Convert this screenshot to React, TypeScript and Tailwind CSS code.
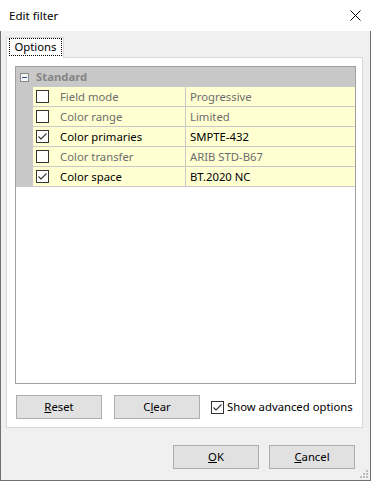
import React from "react";

const rows = [
  { label: "Field mode", value: "Progressive", checked: false },
  { label: "Color range", value: "Limited", checked: false },
  { label: "Color primaries", value: "SMPTE-432", checked: true },
  { label: "Color transfer", value: "ARIB STD-B67", checked: false },
  { label: "Color space", value: "BT.2020 NC", checked: true },
];

function Check({ checked }: { checked: boolean }) {
  return (
    <div className="w-[13px] h-[13px] border border-[#333333] bg-white flex items-center justify-center shrink-0">
      {checked && (
        <svg width="11" height="11" viewBox="0 0 11 11">
          <path d="M1.5 5.5 L4 8 L9.5 2.5" fill="none" stroke="#333333" strokeWidth="1.1" />
        </svg>
      )}
    </div>
  );
}

function Btn({ children, className = "" }: { children: React.ReactNode; className?: string }) {
  return (
    <div
      className={
        "w-[86px] h-[24px] bg-[#e1e1e1] border border-[#adadad] flex items-center justify-center text-black " +
        className
      }
    >
      {children}
    </div>
  );
}

export default function App() {
  return (
    <div className="w-[371px] h-[481px] flex flex-col font-['Segoe_UI','Noto_Sans',sans-serif] text-[11.3px] leading-none text-black">
      <div className="h-[31px] bg-white flex items-center justify-between pl-[9px] pr-[10px] shrink-0">
        <span className="text-[11.6px]">Edit filter</span>
        <svg width="11" height="11" viewBox="0 0 11 11">
          <path d="M0.5 0.5 L10.5 10.5 M10.5 0.5 L0.5 10.5" stroke="#000" strokeWidth="1" />
        </svg>
      </div>
      <div className="relative flex-1 bg-[#f0f0f0] border-x border-b border-[#707070] flex flex-col pt-[6px] pl-[5px]">
        <div className="relative z-10 -mb-px w-[58px] h-[21px] bg-white border-t border-x border-[#d9d9d9] pl-[2px] pt-[0px]">
          <div className="w-[53px] h-[18px] border border-dotted border-black flex items-center justify-center">
            Options
          </div>
        </div>
        <div className="w-[357px] h-[371px] bg-white border border-[#d9d9d9] pl-[8px] pt-[8px] flex flex-col">
          <div className="w-[341px] h-[318px] border border-[#a0a0a0] flex flex-col">
            <div className="h-[20px] bg-[#c8c8c8] flex items-center shrink-0">
              <div className="ml-[4px] w-[9px] h-[9px] border border-[#8a8a8a] bg-[#f4f4f4] flex items-center justify-center">
                <div className="w-[5px] h-px bg-[#2c4f8a]" />
              </div>
              <span className="ml-[7px] font-bold text-[#858585]">Standard</span>
            </div>
            {rows.map((r) => (
              <div key={r.label} className="h-[20px] flex shrink-0">
                <div className="w-[17px] bg-[#c8c8c8]" />
                <div className="flex-1 flex bg-[#ffffd2] border-b border-[#c8c8c8]">
                  <div className="w-[153px] border-r border-[#c8c8c8] flex items-center pl-[3px]">
                    <Check checked={r.checked} />
                    <span className={"ml-[11px] " + (r.checked ? "text-black" : "text-[#6d6d6d]")}>{r.label}</span>
                  </div>
                  <div className={"flex-1 flex items-center pl-[4px] " + (r.checked ? "text-black" : "text-[#6d6d6d]")}>
                    {r.value}
                  </div>
                </div>
              </div>
            ))}
          </div>
          <div className="mt-[11px] ml-[1px] flex items-center">
            <Btn>
              <span><span className="underline">R</span>eset</span>
            </Btn>
            <Btn className="ml-[12px]">
              <span>C<span className="underline">l</span>ear</span>
            </Btn>
            <div className="ml-[11px]">
              <Check checked={true} />
            </div>
            <span className="ml-[3px]">Show advanced options</span>
          </div>
        </div>
        <div className="mt-[17px] flex justify-end pr-[15px]">
          <Btn>
            <span><span className="underline">O</span>K</span>
          </Btn>
          <Btn className="ml-[10px]">
            <span><span className="underline">C</span>ancel</span>
          </Btn>
        </div>
        <svg className="absolute right-[1px] bottom-[1px]" width="9" height="9" viewBox="0 0 9 9">
          <rect x="6" y="0" width="2" height="2" fill="#bcbcbc" />
          <rect x="3" y="3" width="2" height="2" fill="#bcbcbc" />
          <rect x="6" y="3" width="2" height="2" fill="#bcbcbc" />
          <rect x="0" y="6" width="2" height="2" fill="#bcbcbc" />
          <rect x="3" y="6" width="2" height="2" fill="#bcbcbc" />
          <rect x="6" y="6" width="2" height="2" fill="#bcbcbc" />
        </svg>
      </div>
    </div>
  );
}
